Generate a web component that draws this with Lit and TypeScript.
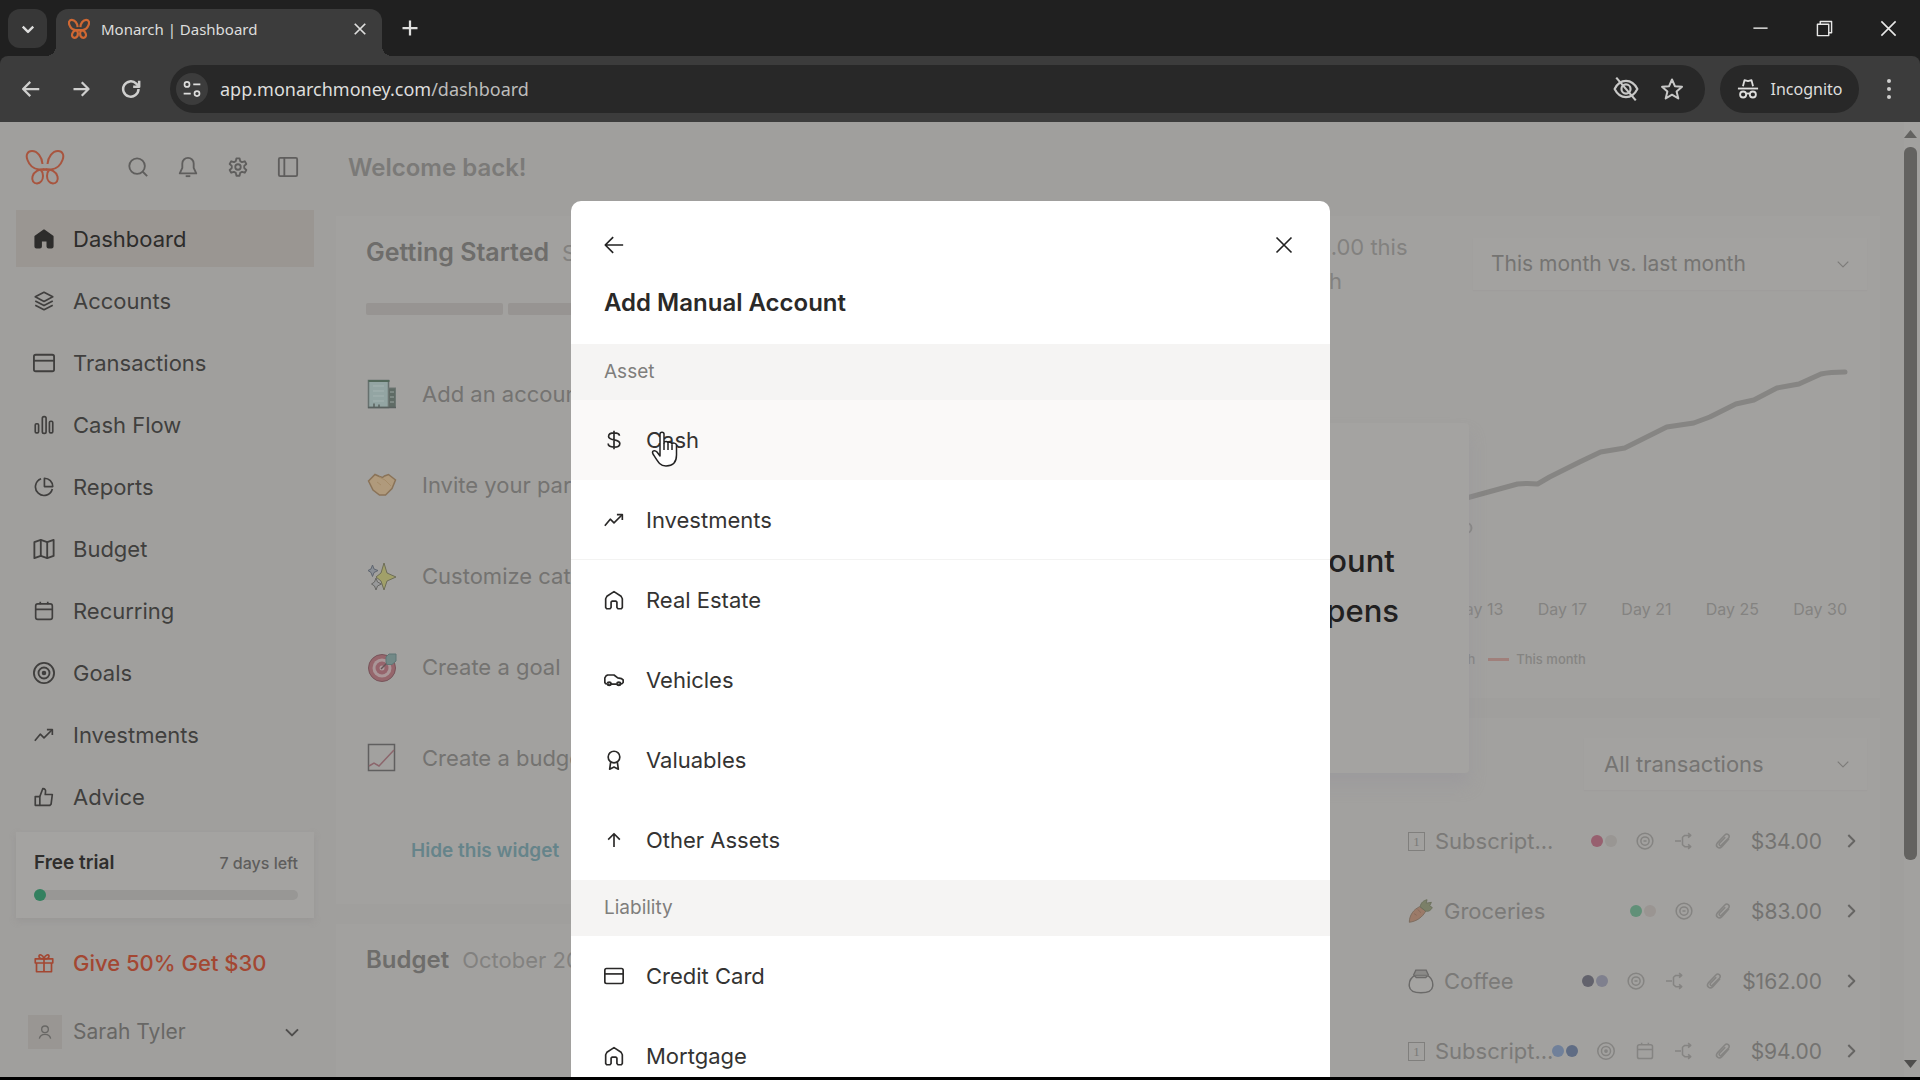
import { LitElement, html, css, svg, TemplateResult } from "lit";
import { customElement } from "lit/decorators.js";
import { classMap } from "lit/directives/class-map.js";

/* Outline icons on a 24-unit grid. */
const paths: Record<string, TemplateResult> = {
  search: svg`<circle cx="11" cy="11" r="8.5"/><path d="M17.2 17.2 22 22"/>`,
  bell: svg`<path d="M12 2a6.2 6.2 0 0 0-6.2 6.2V13L3 19h18l-2.8-6V8.200A6.200 6.200 0 0 0 12 2Z"/><path d="M9.500 22h5"/>`,
  gear: svg`<path d="M10.300 1.500h3.400l.7 3.100 2 1.150 3-1 1.700 2.950-2.300 2.150v2.300l2.300 2.150-1.700 2.950-3-1-2 1.150-.7 3.100h-3.400l-.7-3.100-2-1.150-3 1-1.700-2.950 2.300-2.150v-2.300L2.900 7.700l1.700-2.950 3 1 2-1.150Z" transform="translate(0 1)"/><circle cx="12" cy="12" r="3"/>`,
  panel: svg`<rect x="2" y="2" width="20" height="20" rx="1.500"/><path d="M8 2v20"/>`,
  homeFill: svg`<path d="M12 1.500 22.500 9v12a1.500 1.500 0 0 1-1.500 1.500h-3.500a1.500 1.500 0 0 1-1.500-1.500v-7H8.500v7A1.500 1.500 0 0 1 7 22.500H3A1.500 1.500 0 0 1 1.500 21V9Z" fill="currentColor"/>`,
  home: svg`<path d="M12 2 3.500 7.500 2 10.500V21l1.200 1.500h4L8.500 21v-6.500l1.200-1.200h4.600l1.200 1.200V21l1.300 1.500h4L22 21V10.500l-1.500-3Z"/>`,
  layers: svg`<path d="m12 1.500 10.500 5.500L12 12.500 1.500 7Z"/><path d="M1.500 12 12 17.500 22.500 12"/><path d="M1.500 17 12 22.500 22.500 17"/>`,
  card: svg`<rect x="1" y="3" width="22" height="18" rx="2"/><path d="M1 9.500h22"/>`,
  bars: svg`<rect x="1.500" y="10.500" width="4" height="11" rx="1.500"/><rect x="10" y="2" width="4.500" height="20" rx="2"/><rect x="18.500" y="7.500" width="4" height="14" rx="1.500"/>`,
  pie: svg`<path d="M8.500 2.200A10.300 10.300 0 1 0 22 14.500"/><path d="M12.500 1.500v10h10a10 10 0 0 0-10-10Z"/>`,
  map: svg`<path d="M1.500 4.500 8.500 2l7 2.500 7-2.500v17.500l-7 2.500-7-2.500-7 2.500Z"/><path d="M8.500 2v17.500M15.500 4.500V22"/>`,
  calendar: svg`<rect x="2" y="3.500" width="20" height="18.500" rx="2.500"/><path d="M2 10h20M7.500 1v3M16.500 1v3"/>`,
  target: svg`<circle cx="12" cy="12" r="11"/><circle cx="12" cy="12" r="6"/><circle cx="12" cy="12" r="1.500" fill="currentColor"/>`,
  trend: svg`<path d="m1 19 6.500-8 4.500 4.500L21.500 6"/><path d="M15.500 5.500H22V12"/>`,
  thumb: svg`<path d="M1.500 11.500H7V22H1.500Z"/><path d="m7 11.500 3.500-9.500c2.500-.2 3.800 1.500 3.300 4L13.500 9H22l-1.500 11.500L19 22H7"/>`,
  gift: svg`<rect x="1.500" y="7" width="21" height="5"/><path d="M3 12v10.500h18V12M12 7v15.500"/><path d="M12 7C9 7 6 6.200 6 3.800S10.500 1.500 12 7c1.500-5.500 6-5.600 6-3.200S15 7 12 7Z"/>`,
  person: svg`<circle cx="12" cy="8" r="5"/><path d="M3.500 22c1-5 4-6.500 8.500-6.500s7.500 1.500 8.500 6.500"/>`,
  down: svg`<path d="m3 8 9 9 9-9"/>`,
  right: svg`<path d="m8 3 9 9-9 9"/>`,
  back: svg`<path d="M23 12H2M11 2.500 1.500 12l9.500 9.500"/>`,
  forward: svg`<path d="M2 12h20M13 3l9 9-9 9"/>`,
  reload: svg`<path d="M21 12a9.200 9.200 0 1 1-2.700-6.500L21.500 9"/><path d="M21.800 2v7.200h-7.200"/>`,
  close: svg`<path d="m3 3 18 18M21 3 3 21"/>`,
  plus: svg`<path d="M12 2v20M2 12h20"/>`,
  minus: svg`<path d="M2 11.500h20"/>`,
  restore: svg`<rect x="2" y="6" width="16" height="16"/><path d="M6 6V2h16v16h-4"/>`,
  tune: svg`<circle cx="6" cy="6.500" r="3"/><path d="M13.500 6.500H22M2 17.500h8.500"/><circle cx="18" cy="17.500" r="3"/>`,
  eyeOff: svg`<path d="M1.500 12C4 7 7.500 4.500 12 4.500S20 7 22.500 12C20 17 16.500 19.500 12 19.500S4 17 1.500 12Z"/><circle cx="12" cy="12" r="4.200"/><path d="M3 1.500 21 22.500"/>`,
  star: svg`<path d="m12 2.500 2.900 6.700 7.100.6-5.400 4.700 1.700 7-6.300-3.800-6.300 3.800 1.700-7L2 9.800l7.100-.6Z"/>`,
  incognito: svg`<path d="M6.500 9 8.200 2.300 12 3.300l3.800-1L17.500 9" /><path d="M1 11.500h22"/><circle cx="6.700" cy="18" r="3.300"/><circle cx="17.300" cy="18" r="3.300"/><path d="M10 17.500c1.200-.8 2.800-.8 4 0"/>`,
  dollar: svg`<path d="M12 1v22M18.500 7c0-2.300-2.500-3.500-6.500-3.500S5.500 5 5.500 7.700c0 5.600 13.500 2.800 13.500 8.400 0 2.900-2.800 4.400-7 4.400s-7-1.500-7-4.200"/>`,
  car: svg`<path d="M3.500 16.500H2l-1-1.500V9.500L2.500 7l2-1H12l4.500 3.500 4.500.8 2 1.700v3l-1.500 1.500H20M8.500 17h7"/><path d="M4 16.500a2.300 2.300 0 0 0 4.500 0 2.300 2.300 0 0 0-4.500 0M15.500 16.500a2.300 2.300 0 0 0 4.500 0 2.300 2.300 0 0 0-4.500 0" stroke-width="2.500"/>`,
  medal: svg`<circle cx="12" cy="8.500" r="7"/><path d="m8 14.500-1.200 8.500 5.200-2.500 5.200 2.500L16 14.500"/>`,
  up: svg`<path d="M12 20.500V5M5 11.500 12 4.500l7 7"/>`,
  split: svg`<path d="M0 12h8M20 4.500h-7L10 7v10l3 2.500h7M17.500 1.500l3.500 3-3.500 3M17.500 16.500l3.500 3-3.500 3"/>`,
  clip: svg`<path d="m20 9-9.500 10.500c-4 4-9.500-.5-6-5L14.500 4c3-3 7.500.5 5 4L10 17.500c-1.800 1.800-4.300-.5-2.700-2.400L15 7"/>`,
  smile: svg`<circle cx="12" cy="12" r="10.500"/><circle cx="12" cy="12" r="5.500"/><path d="M10 12h4"/>`,
};
const icon = (name: string, size = 20, width = 2) =>
  html`<svg class="icon" viewBox="0 0 24 24" width=${size} height=${size} fill="none" stroke="currentColor" stroke-width=${width} stroke-linejoin="round" aria-hidden="true">${paths[name]}</svg>`;

const wing = svg`<path d="M16.500 14C16 7 11.500 1 6 1 1.500 1-.5 5 1.500 10c2 5.500 6 9 11.500 9.500h8"/><path d="M18 19.500c-5-.5-10 2-11.500 7-1 4 1 7 4.500 7 3.500-.5 6-3.500 6-7.500 0-2.500-1-5-2.500-6.500"/>`;
const butterfly = (w: number, h: number, stroke: number) =>
  html`<svg class="brand" viewBox="-1 0 40 35" width=${w} height=${h} fill="none" stroke="currentColor" stroke-width=${stroke} stroke-linejoin="round" role="img" aria-label="Monarch">${wing}<g transform="matrix(-1 0 0 1 38 0)">${wing}</g></svg>`;

/* Small colour pictures beside checklist steps and categories. */
const art: Record<string, TemplateResult> = {
  building: svg`<rect x="1.500" y="1.500" width="20" height="27" fill="#93a5a3" stroke="#66706e" stroke-width="1.500"/><path d="M1.500 2h21" stroke="#52685a" stroke-width="2"/><path d="M6 7h11M6 12h11M6 17h11M6 22h11" stroke="#a4b3b1"/><rect x="21.500" y="9" width="7" height="19.500" fill="#5f6b65" stroke="#6d7673"/><path d="M23 13h4M23 18h4M23 23h4" stroke="#9aa5a1"/><path d="M7 28.500v-4M12 28.500v-3M1 28.500h28" stroke="#59615f" stroke-width="1.500"/>`,
  heart: svg`<path d="M1.500 11 8 4.500l4.500 2 3 1 2-1.500 4-1.500L28.500 10 25 18.500 18.500 25h-6L6 20Z" fill="#b09a7c" stroke="#8a7358" stroke-width="1.500"/><path d="m12 7 6 3 6 6M10 12l4 3" stroke="#a58c69" fill="none"/>`,
  sparkles: svg`<path d="m17 2 3 10 9 4-9 4-3 9-3-9-5-4 5-4Z" fill="#a1a069" stroke="#6d6d58"/><path d="m5.500 4 1.500 4 4 1.500-4 2-1.500 4-1.500-4-3-2 3-1.500Z" fill="#8a8f96" stroke="#5f6670"/><path d="m9 17 1.500 4 4 2-4 2L9 29l-1.500-4-3-2 3-2Z" fill="#98999a" stroke="#676764"/>`,
  goal: svg`<circle cx="15" cy="16" r="13.500" fill="#96666c" stroke="#77555b"/><circle cx="15" cy="16" r="9.500" fill="#aa9698"/><circle cx="15" cy="16" r="6.500" fill="#96646c"/><circle cx="15" cy="16" r="2.500" fill="#ac9a9b"/><path d="m14 17 8-8" stroke="#665558" stroke-width="1.500"/><path d="M19 10V5l3-3h7v7l-4 3.500h-5Z" fill="#728987" stroke="#5f7776"/>`,
  chart: svg`<rect x="1.500" y="1.500" width="26" height="26" fill="none" stroke="#605f5f" stroke-width="1.500"/><path d="m2 23 5-3 5 3L27 7" fill="none" stroke="#8c666c" stroke-width="1.500"/>`,
  carrot: svg`<path d="M1.500 28c0-8 5-15 12-18l7 5C17 22 10 27 1.500 28Z" fill="#9b7a68" stroke="#79695c"/><path d="m7 18 3 2m1-7 4 4" stroke="#85695a"/><path d="M14 10c1-5 4-7 8-8l-1 4 6-1-2 4 3 2c-2 4-5 5-8 4Z" fill="#7b8068" stroke="#696e5a"/>`,
  bag: svg`<path d="M9 8C3 11 1 16 1.500 21c.5 5 5 7.500 13.500 7.500S28 26 28.500 21c.5-5-1-10-7-13Z" fill="#a5a4a2" stroke="#6b6a69" stroke-width="1.700"/><path d="M9 2.500h12l2.500 5.500-3 3h-11l-3-3Z" fill="#8b8a88" stroke="#6b6a69" stroke-width="1.500"/><path d="M8 8.500h15" stroke="#757473" stroke-width="1.500"/>`,
};
const picture = (name: string, size = 30) =>
  html`<svg class="icon" viewBox="0 0 30 30" width=${size} height=${size} fill="none" aria-hidden="true">${art[name]}</svg>`;

@customElement("browser-bar")
class BrowserBar extends LitElement {
  static styles = css`
    :host { display: block; background: #202020; color: #dededd; font-family: "Noto Sans", "Open Sans", sans-serif; }
    * { box-sizing: border-box; }
    button { border: 0; padding: 0; background: none; color: inherit; font: inherit; display: flex; align-items: center; justify-content: center; }
    .icon, .brand { display: block; flex: none; }
    .strip { height: 56px; display: flex; align-items: flex-end; padding: 0 0 0 8px; }
    .menu { width: 39px; height: 39px; border-radius: 12px; background: #373737; margin-bottom: 8px; }
    .tab { width: 326px; height: 47px; margin-left: 9px; background: #3c3c3c; border-radius: 12px 12px 0 0; display: flex; align-items: center; padding: 0 15px 8px 12px; position: relative; font-size: 15px; }
    .tab::before, .tab::after { content: ""; position: absolute; bottom: 0; width: 10px; height: 10px; }
    .tab::before { left: -10px; background: radial-gradient(circle at 0 0, #202020 10px, #3c3c3c 10px); }
    .tab::after { right: -10px; background: radial-gradient(circle at 100% 0, #202020 10px, #3c3c3c 10px); }
    .tab .brand { color: #cf6833; }
    .title { margin-left: 11px; flex: 1; white-space: nowrap; }
    .add { width: 36px; height: 36px; margin: 0 0 10px 10px; }
    .window { margin-left: auto; display: flex; }
    .window button { width: 64px; height: 56px; color: #e8e8e7; }
    .bar { height: 66px; background: #3c3c3c; border-radius: 8px 8px 0 0; display: flex; align-items: center; padding: 0 16px 0 6px; }
    .nav { width: 50px; height: 40px; color: #cfcfce; }
    .address { flex: 1; height: 48px; margin-left: 14px; border-radius: 24px; background: #282828; display: flex; align-items: center; padding: 0 10px 0 6px; font-size: 18px; }
    .site { width: 32px; height: 32px; border-radius: 16px; background: #3c3c3c; }
    .url { flex: 1; margin-left: 12px; line-height: 28px; }
    .path { color: #bdbdbc; }
    .address .end { width: 46px; color: #c8c8c7; }
    .incognito { height: 48px; width: 139px; border-radius: 24px; background: #282828; margin-left: 15px; gap: 12px; font-size: 16px; }
    .more { width: 30px; height: 40px; margin-left: 15px; flex-direction: column; gap: 4px; }
    .more i { width: 4px; height: 4px; border-radius: 2px; background: #cfcfce; }
  `;
  render() {
    return html`
      <div class="strip">
        <button class="menu" aria-label="Search tabs">${icon("down", 14, 4)}</button>
        <div class="tab">${butterfly(22, 22, 4)}<span class="title">Monarch | Dashboard</span><button aria-label="Close tab">${icon("close", 14, 3)}</button></div>
        <button class="add" aria-label="New tab">${icon("plus", 18, 3)}</button>
        <div class="window">
          <button aria-label="Minimize">${icon("minus", 17, 2)}</button>
          <button aria-label="Restore">${icon("restore", 17, 2)}</button>
          <button aria-label="Close window">${icon("close", 19, 2)}</button>
        </div>
      </div>
      <div class="bar">
        <button class="nav" aria-label="Back">${icon("back", 18, 3)}</button>
        <button class="nav" aria-label="Forward">${icon("forward", 18, 3)}</button>
        <button class="nav" aria-label="Reload">${icon("reload", 20, 3)}</button>
        <div class="address">
          <button class="site" aria-label="Site information">${icon("tune", 20, 2)}</button>
          <span class="url">app.monarchmoney.com<span class="path">/dashboard</span></span>
          <button class="end" aria-label="Tracking protection">${icon("eyeOff", 26, 2)}</button>
          <button class="end" aria-label="Bookmark">${icon("star", 24, 2)}</button>
        </div>
        <button class="incognito">${icon("incognito", 22, 2)}Incognito</button>
        <button class="more" aria-label="Menu"><i></i><i></i><i></i></button>
      </div>`;
  }
}

@customElement("side-nav")
class SideNav extends LitElement {
  static styles = css`
    :host { display: flex; flex-direction: column; width: 330px; flex: none; padding: 0 16px; color: #403f3e; }
    :host, * { box-sizing: border-box; }
    button { border: 0; padding: 0; background: none; color: inherit; font: inherit; display: flex; align-items: center; }
    .icon, .brand { display: block; flex: none; }
    .head { height: 88px; display: flex; align-items: center; padding: 2px 0 0 9px; flex: none; }
    .head .brand { color: #a8553f; margin-right: 48px; }
    .head button { width: 50px; height: 40px; justify-content: center; color: #5f5e5d; }
    nav { display: flex; flex-direction: column; gap: 5px; }
    .item { height: 57px; flex: none; display: flex; align-items: center; gap: 18px; padding: 0 17px; color: inherit; text-decoration: none; font-size: 22px; }
    .slot { width: 22px; flex: none; display: flex; justify-content: center; }
    .item.current { background: #9a9692; color: #2d2c2b; }
    .trial { margin-top: 7px; padding: 18px 16px 18px 18px; background: #a4a3a1; box-shadow: 0 3px 6px #8e8d8b66; flex: none; }
    .terms { display: flex; justify-content: space-between; align-items: center; font-size: 16px; line-height: 26px; font-weight: 500; color: #5e5d5c; }
    .terms strong { font-size: 19px; font-weight: 600; color: #2f2e2d; }
    .meter { margin-top: 14px; height: 10px; border-radius: 5px; background: #989795; display: flex; align-items: center; }
    .fill { height: 12px; min-width: 12px; border-radius: 6px; background: #33805f; }
    .gift { margin-top: 16px; color: #a34732; font-weight: 500; }
    .user { margin-top: 12px; padding: 0 14px 0 12px; gap: 11px; font-size: 21px; color: #686765; }
    .user span { flex: 1; text-align: left; }
    .avatar { width: 34px; height: 34px; background: #999693; display: flex; align-items: center; justify-content: center; }
    .user > .icon { color: #4f4e4d; }
  `;
  items = [["Dashboard", "homeFill"], ["Accounts", "layers"], ["Transactions", "card"], ["Cash Flow", "bars"], ["Reports", "pie"], ["Budget", "map"], ["Recurring", "calendar"], ["Goals", "target"], ["Investments", "trend"], ["Advice", "thumb"]];
  render() {
    return html`
      <div class="head">${butterfly(40, 35, 2)}
        <button aria-label="Search">${icon("search", 22)}</button><button aria-label="Notifications">${icon("bell", 22)}</button>
        <button aria-label="Settings">${icon("gear", 22)}</button><button aria-label="Collapse sidebar">${icon("panel", 22)}</button>
      </div>
      <nav>${this.items.map(([label, name], i) => html`<a href="#" class=${classMap({ item: true, current: i === 0 })}><i class="slot">${icon(name, ["card", "map", "target"].includes(name) ? 22 : 20)}</i>${label}</a>`)}</nav>
      <div class="trial">
        <div class="terms"><strong>Free trial</strong><span>7 days left</span></div>
        <div class="meter"><div class="fill" style="width:4%"></div></div>
      </div>
      <a href="#" class="item gift"><i class="slot">${icon("gift")}</i>Give 50% Get $30</a>
      <button class="item user"><i class="avatar">${icon("person", 16)}</i><span>Sarah Tyler</span>${icon("down", 16, 3)}</button>`;
  }
}

interface Row { merchant: string; art: string; category: string; dots: string[]; marks: string[]; amount: string }

@customElement("dashboard-main")
class DashboardMain extends LitElement {
  static styles = css`
    :host { display: block; flex: 1; min-width: 0; padding: 0 24px 0 6px; color: #747371; }
    * { box-sizing: border-box; }
    h1, h2, p, ul, ol { margin: 0; padding: 0; list-style: none; }
    button { border: 0; padding: 0; background: none; color: inherit; font: inherit; }
    .icon { display: block; flex: none; }
    h1 { height: 94px; padding-left: 12px; font-size: 24px; line-height: 92px; font-weight: 600; color: #7b7a78; }
    .grid { display: grid; grid-template-columns: 1fr 1fr; gap: 16px; align-items: start; }
    .column { display: flex; flex-direction: column; gap: 20px; min-width: 0; }
    .card { background: #a2a19f; padding: 20px 30px; }
    .head { display: flex; align-items: baseline; gap: 13px; line-height: 32px; font-size: 22px; color: #82817f; white-space: nowrap; }
    h2 { font-size: 24px; font-weight: 600; color: #6e6d6b; }
    .big h2 { font-size: 25px; }
    .progress { display: grid; grid-template-columns: repeat(5, 1fr); gap: 5px; margin-top: 34px; }
    .progress i { height: 12px; border-radius: 2px; background: #979492; }
    .steps { margin-top: 33px; }
    .steps li { height: 91px; display: flex; align-items: center; gap: 25px; padding-left: 1px; font-size: 22px; }
    .hide { display: block; margin: 34px 45px 19px; font-size: 19px; line-height: 28px; font-weight: 600; color: #66848a; }
    .budget { min-height: 200px; }
    .spending { padding: 14px 13px 29px 30px; }
    .spending .head { align-items: center; line-height: 34px; gap: 20px; height: 68px; }
    .spending .head h2 { align-self: flex-start; }
    .picker { position: relative; margin-left: auto; height: 52px; background: #a3a2a0; box-shadow: 0 1px 1px #9594923d; display: flex; align-items: center; color: #7c7b79; }
    .picker .icon { position: absolute; right: 17px; pointer-events: none; }
    .picker.wide { width: 394px; }
    .picker.short { width: 283px; }
    select { appearance: none; border: 0; background: none; width: 100%; height: 100%; padding: 0 18px; font: inherit; font-size: 21px; color: #757472; }
    .short select { font-size: 22px; padding: 0 20px; }
    .chart { display: block; width: 100%; height: 270px; margin-top: 20px; }
    .days { display: flex; justify-content: space-between; margin-top: 11px; padding: 0 20px 0 77px; font-size: 16px; line-height: 20px; color: #848381; }
    .legend { display: flex; justify-content: center; align-items: center; margin-top: 30px; padding-right: 49px; font-size: 13px; line-height: 20px; font-weight: 500; color: #858482; gap: 7px; }
    .legend i { width: 21px; height: 3px; background: #868583; }
    .legend .now { background: #a0807b; margin-left: 6px; }
    .recent { padding: 20px 13px 20px 30px; }
    .rows { margin-top: 16px; padding-right: 8px; }
    .row { display: grid; grid-template-columns: 1fr 148px 266px 37px; height: 70px; align-items: center; font-size: 22px; color: #7b7a78; text-decoration: none; }
    .row .label { display: flex; align-items: center; gap: 10px; white-space: nowrap; }
    .row .marks { display: flex; align-items: center; justify-content: flex-end; gap: 17px; min-width: 0; color: #858482; }
    .row .amount { font-size: 21px; color: #747371; }
    .dots { display: flex; gap: 2px; flex: none; }
    .dots i { width: 12px; height: 12px; border-radius: 6px; }
    .slot { width: 22px; display: flex; justify-content: center; flex: none; }
    .row > .icon { justify-self: end; color: #666563; }
    .keycap { width: 17px; height: 19px; border: 1px solid #807f7d; font: 13px/17px "Liberation Serif", serif; text-align: center; flex: none; }
  `;
  steps = [["Add an account", "building"], ["Invite your partner", "heart"], ["Customize categories", "sparkles"], ["Create a goal", "goal"], ["Create a budget", "chart"]];
  rows: Row[] = [
    { merchant: "Netflix", art: "", category: "Subscript...", dots: ["#97606f", "#999693"], marks: ["smile", "split", "clip"], amount: "$34.00" },
    { merchant: "Market", art: "carrot", category: "Groceries", dots: ["#619078", "#9a9592"], marks: ["smile", "clip"], amount: "$83.00" },
    { merchant: "Cafe", art: "bag", category: "Coffee", dots: ["#62626c", "#7f808e"], marks: ["smile", "split", "clip"], amount: "$162.00" },
    { merchant: "Spotify", art: "", category: "Subscript...", dots: ["#70809a", "#5f6c84"], marks: ["target", "calendar", "split", "clip"], amount: "$94.00" },
  ];
  render() {
    return html`
      <h1>Welcome back!</h1>
      <div class="grid">
        <div class="column">
          <section class="card">
            <div class="head big"><h2>Getting Started</h2>Start here</div>
            <div class="progress"><i></i><i></i><i></i><i></i><i></i></div>
            <ol class="steps">${this.steps.map(([t, a]) => html`<li>${picture(a)}${t}</li>`)}</ol>
            <button class="hide">Hide this widget</button>
          </section>
          <section class="card budget"><div class="head"><h2>Budget</h2>October 2025</div></section>
        </div>
        <div class="column">
          <section class="card spending">
            <div class="head"><h2>Spending</h2><p>$263.00 this<br>month</p>
              <label class="picker wide"><select aria-label="Period"><option>This month vs. last month</option></select>${icon("down", 14, 2)}</label>
            </div>
            <svg class="chart" viewBox="3 0 720 270" preserveAspectRatio="none" fill="none" aria-hidden="true">
              <circle cx="323" cy="210" r="5" stroke="#868583" stroke-width="2"/>
              <path d="M53 260 180 220 260 200 323 180 374 166Q384 165 394 166L406 159 436 144 457 134 481 130 523 109 550 105 566 99 592 86 610 82 633 70 655 66 677 56Q686 54 701 54" stroke="#868583" stroke-width="5" stroke-linejoin="round" stroke-linecap="round"/>
            </svg>
            <div class="days">${[1, 5, 9, 13, 17, 21, 25, 30].map((d) => html`<span>Day ${d}</span>`)}</div>
            <div class="legend"><i></i><span>Last month</span><i class="now"></i><span>This month</span></div>
          </section>
          <section class="card recent">
            <div class="head"><h2>Transactions</h2>
              <label class="picker short"><select aria-label="Filter"><option>All transactions</option></select>${icon("down", 14, 2)}</label>
            </div>
            <div class="rows">${this.rows.map((r) => html`
              <a href="#" class="row"><span>${r.merchant}</span>
                <span class="label">${r.art ? picture(r.art, 26) : html`<i class="keycap">1</i>`}${r.category}</span>
                <span class="marks"><span class="dots">${r.dots.map((c) => html`<i style="background:${c}"></i>`)}</span>
                  ${r.marks.map((m) => html`<span class="slot">${icon(m, 18)}</span>`)}<span class="amount">${r.amount}</span></span>
                ${icon("right", 16, 3)}</a>`)}</div>
          </section>
        </div>
      </div>`;
  }
}

@customElement("account-dialog")
class AccountDialog extends LitElement {
  static styles = css`
    :host { display: block; width: 759px; max-width: 100%; background: #fff; border-radius: 10px 10px 0 0; overflow: hidden; color: #343332; }
    * { box-sizing: border-box; }
    button { border: 0; padding: 0; background: none; color: inherit; font: inherit; display: flex; align-items: center; }
    .icon { display: block; flex: none; }
    header { padding: 26px 36px 23px 33px; }
    .tools { display: flex; justify-content: space-between; height: 36px; }
    .tools button { width: 20px; color: #222; }
    h2 { margin: 22px 0 0; font-size: 24px; line-height: 36px; font-weight: 600; color: #2a2928; }
    h3 { margin: 0; height: 56px; padding: 0 33px; font-size: 19px; line-height: 56px; font-weight: 400; color: #7f7e7c; background: #f5f4f3; }
    .row { width: 100%; height: 80px; padding: 0 33px; gap: 22px; font-size: 22px; }
    .row.hover { background: #faf9f8; }
    .row.ruled { border-bottom: 1px solid #f3f3f2; }
    .row .icon { color: #2a2928; }
  `;
  groups: [string, string[][]][] = [
    ["Asset", [["Cash", "dollar", "hover"], ["Investments", "trend", "ruled"], ["Real Estate", "home"], ["Vehicles", "car"], ["Valuables", "medal"], ["Other Assets", "up"]]],
    ["Liability", [["Credit Card", "card"], ["Mortgage", "home"]]],
  ];
  render() {
    return html`
      <header>
        <div class="tools"><button aria-label="Back">${icon("back", 20)}</button><button aria-label="Close">${icon("close", 20)}</button></div>
        <h2>Add Manual Account</h2>
      </header>
      ${this.groups.map(([name, rows]) => html`<h3>${name}</h3>${rows.map(([t, i, s]) => html`<button class="row ${s ?? ""}">${icon(i)}${t}</button>`)}`)}`;
  }
}

@customElement("app-root")
class AppRoot extends LitElement {
  static styles = css`
    :host { display: flex; flex-direction: column; height: 100vh; font-family: Inter, "Liberation Sans", sans-serif; background: #000; }
    * { box-sizing: border-box; }
    .page { flex: 1; min-height: 0; display: flex; position: relative; overflow: hidden; background: #a09f9d; margin-bottom: 3px; }
    .scroll { width: 16px; flex: none; background: #a2a19f; display: flex; flex-direction: column; align-items: flex-start; padding: 8px 0 9px; }
    .scroll svg { display: block; }
    .thumb { width: 13px; height: 713px; border-radius: 6px; background: #636260; margin: 9px 0 auto; }
    .tour { position: absolute; top: 301px; right: 451px; padding: 113px 70px 137px 300px; background: #a4a3a1; border-radius: 4px; box-shadow: 0 12px 16px #96949a77; font-size: 31px; line-height: 50px; font-weight: 500; text-align: center; color: #212020; }
    .tour p { margin: 0; }
    .overlay { position: absolute; inset: 79px 19px 0 0; display: flex; justify-content: center; align-items: flex-start; }
    .cursor { position: absolute; left: 651px; top: 308px; }
  `;
  render() {
    return html`
      <browser-bar></browser-bar>
      <div class="page">
        <side-nav></side-nav>
        <dashboard-main></dashboard-main>
        <div class="scroll">
          <svg width="13" height="8" viewBox="0 0 13 8"><path d="M0 8 6.500 0 13 8Z" fill="#636260"/></svg>
          <div class="thumb"></div>
          <svg width="13" height="8" viewBox="0 0 13 8"><path d="M0 0h13L6.500 8Z" fill="#4f4e4d"/></svg>
        </div>
        <div class="tour"><p>account<br>happens</p></div>
        <div class="overlay"><account-dialog></account-dialog></div>
        <svg class="cursor" width="28" height="38" viewBox="0 0 28 38" fill="#fff" stroke="#222" stroke-width="1.500" stroke-linejoin="round" aria-hidden="true">
          <path d="M9 26V4c0-2.500 4-2.500 4 0v9c0-2 4-2 4 .5 0-2 4-1.500 4 .8 0-2 4.500-1.500 4.500 1.200V25c0 8-4 11-10.500 11-6 0-8-4-13-12-1.500-3 1.500-4.500 4-2Z"/>
          <path d="M13 13v7M17 14v6M21 15v5" fill="none"/>
        </svg>
      </div>`;
  }
}
